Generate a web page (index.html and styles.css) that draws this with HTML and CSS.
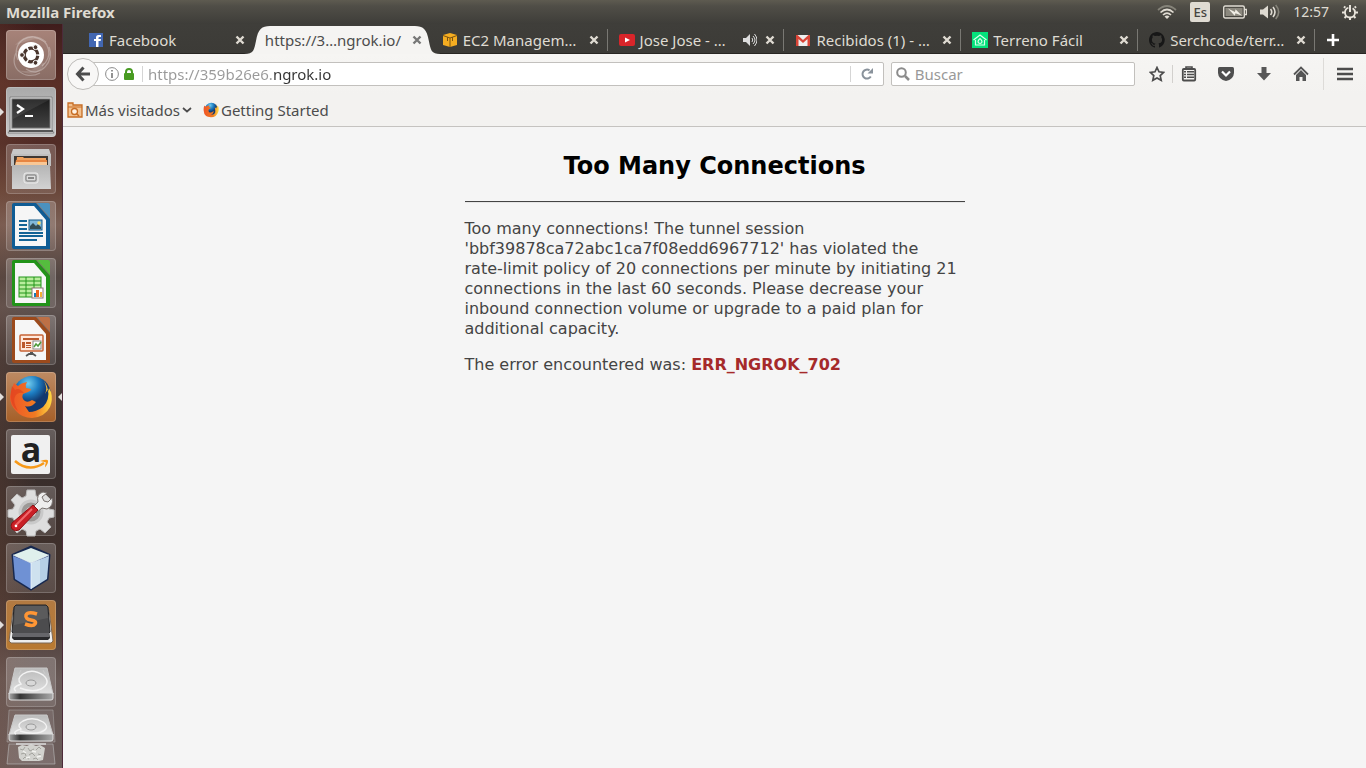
FILE: index.html
```html
<!DOCTYPE html>
<html lang="es">
<head>
<meta charset="utf-8">
<title>Too Many Connections</title>
<link rel="stylesheet" href="styles.css">
</head>
<body>
<header class="panel">
  <span class="panel-title">Mozilla Firefox</span>
  <div class="indicators">
    <button aria-label="Red"><svg width="20" height="16" viewBox="0 0 20 16" fill="none" stroke-width="1.7"><path d="M1 6Q10-2 19 6" stroke="#858379"/><path d="M3.500 8.500Q10 2.500 16.500 8.500M6 11Q10 7 14 11" stroke="#dfdbd2"/><path d="M7.500 12.500L10 15l2.500-2.500Q10 10.500 7.500 12.500z" fill="#dfdbd2" stroke="none"/></svg></button>
    <button class="keyboard">Es</button>
    <button aria-label="Batería"><svg width="24" height="14" viewBox="0 0 24 14"><rect x=".7" y="1" width="20.600" height="12" rx="1.500" fill="none" stroke="#dfdbd2" stroke-width="1.400"/><rect x="2.500" y="3" width="17" height="8" fill="#8b887e"/><path d="M22 4.500h1.500v5H22" fill="none" stroke="#dfdbd2" stroke-width="1.400"/><path d="M5 3.500l7 3.500.5-2.800 6.500 6.600-6.500-2.600-.8 2.600z" fill="#efece4"/></svg></button>
    <button aria-label="Volumen"><svg width="20" height="16" viewBox="0 0 20 16" fill="none" stroke="#dfdbd2" stroke-width="1.600"><path d="M0 5.500h3L8 1.500v13L3 10.500H0z" fill="#dfdbd2" stroke="none"/><path d="M10.500 5q2.500 3 0 6M13 3q4 5 0 10"/><path d="M15.700 1q6 7 0 14" stroke="#858379"/></svg></button>
    <button class="clock">12:57</button>
    <button aria-label="Sistema"><svg width="16" height="16" viewBox="0 0 16 16" fill="none" stroke="#e8e4db"><circle cx="8" cy="8.500" r="5" stroke-width="1.800" stroke-dasharray="27 4.400" stroke-dashoffset="-25.700"/><path d="M8 1v7" stroke-width="2"/><path d="M3.300 3.800L2 2.500M12.700 3.800L14 2.500M3 8.500H0M13 8.500h3M4.500 12L2.500 14M11.500 12l2 2M8 13v3" stroke-width="2"/></svg></button>
  </div>
</header>

<div class="desktop">
<nav class="launcher" aria-label="Lanzador">
  <button class="tile dash" aria-label="Buscar en el equipo"><svg viewBox="0 0 50 50"><g fill="none" stroke="#fff" stroke-opacity=".28" stroke-width="1.300"><path d="M12 30C4 12 25-1 40 12M36 36c11-9 9-26-8-29M20 39C35 49 49 30 43 17M11 21C1 38 19 51 34 43"/></g><path d="M9 15Q25-3 42 15 33 7 25 10zM39 33Q33 50 11 40q18 4 21-8z" fill="#fff" opacity=".14"/><circle cx="25" cy="25" r="13" fill="#fff"/><circle cx="25" cy="25" r="6.800" fill="none" stroke="#49352d" stroke-width="3.200" stroke-dasharray="12.600 1.640" stroke-dashoffset="-.8"/><g fill="#49352d" stroke="#fff" stroke-width="1"><circle cx="16" cy="25" r="2.400"/><circle cx="29.500" cy="17.200" r="2.400"/><circle cx="29.500" cy="32.800" r="2.400"/></g></svg></button>
  <button class="tile terminal running" aria-label="Terminal"><svg viewBox="0 0 50 50"><defs><linearGradient id="scr" y2="1" x2="0"><stop stop-color="#1d1d1d"/><stop offset="1" stop-color="#444"/></linearGradient></defs><path d="M4 10h42v33l2 3H2l2-3z" fill="#ddd" stroke="#777" stroke-width=".8"/><path d="M3 43h44v2H3z" fill="#555"/><rect x="6" y="12" width="38" height="29" fill="url(#scr)" stroke="#777"/><path d="M7 13h36L7 32z" fill="#fff" opacity=".08"/><path d="M11 18l6 4-6 4M19 29h8" fill="none" stroke="#fff" stroke-width="2.200"/></svg></button>
  <button class="tile" aria-label="Archivos"><svg viewBox="0 0 50 50"><defs><linearGradient id="cab" y2="1" x2="0"><stop stop-color="#b5b5b5"/><stop offset="1" stop-color="#d2d2d2"/></linearGradient></defs><path d="M7 5h36l2 6v10H5V11z" fill="#c8c8c8"/><path d="M5 10h40v12H5z" fill="#bfbfbf"/><path d="M8 12h34v10H8z" fill="#3f3833"/><path d="M11 13h6l1 1h22v8H10z" fill="#f0a15d"/><path d="M10 16h31v6H9z" fill="#e78542"/><path d="M10 18h31v4H9z" fill="#f8c796"/><path d="M6 21h38l1 24H6z" fill="url(#cab)"/><rect x="18" y="29" width="14" height="10" rx="2" fill="#c8c8c8" stroke="#eee"/><rect x="20" y="31" width="10" height="6" rx="1" fill="#ddd" stroke="#777"/><path d="M22 34h6" stroke="#888" stroke-width="2"/></svg></button>
  <button class="tile" aria-label="LibreOffice Writer"><svg viewBox="0 0 50 50"><path d="M8 2h22l14 16v30H8q-2 0-2-2V4q0-2 2-2z" fill="#0f5c94"/><path d="M9 5h19l12 14v26H9z" fill="#f6f6f6"/><path d="M31 2h11q2 0 2 2v13z" fill="#4b91be"/><g stroke="#146496" stroke-width="2"><path d="M13 20h8M13 24h8M13 28h8M13 32h24M13 35h24M13 39h18"/></g><rect x="23" y="19" width="13" height="10" fill="#81b8d9" stroke="#155b87"/><path d="M24 28v-3l3-3 3 3 2-2 3 3v2z" fill="#334d55"/><circle cx="33" cy="22" r="1.700" fill="#ffdd5e"/></svg></button>
  <button class="tile" aria-label="LibreOffice Calc"><svg viewBox="0 0 50 50"><path d="M8 2h22l14 16v30H8q-2 0-2-2V4q0-2 2-2z" fill="#229319"/><path d="M9 5h19l12 14v26H9z" fill="#f6f6f6"/><path d="M31 2h11q2 0 2 2v13z" fill="#55bd3e"/><rect x="13" y="19" width="22" height="20" fill="#b9ed9d" stroke="#23951b"/><path d="M13 23h22M13 27h22M13 31h22M13 35h22M20 19v20M28 19v20" stroke="#23951b"/><rect x="26" y="30" width="11" height="10" fill="#fff" stroke="#8c7777"/><path d="M28 35h2v4h-2z" fill="#187cb8"/><path d="M30 32h3v7h-3z" fill="#ed641f"/><path d="M34 34h2v5h-2z" fill="#f5af35"/></svg></button>
  <button class="tile" aria-label="LibreOffice Impress"><svg viewBox="0 0 50 50"><path d="M8 2h22l14 16v30H8q-2 0-2-2V4q0-2 2-2z" fill="#9c4a1c"/><path d="M9 5h19l12 14v26H9z" fill="#f6f6f6"/><path d="M31 2h11q2 0 2 2v13z" fill="#bd7046"/><rect x="14" y="20" width="23" height="16" rx="1" fill="#ffe9dc" stroke="#c76334" stroke-width="1.500"/><path d="M17 23h16v2H17zM16 27h3v6h-3zM20 27h5v2h-5zM20 30h5v1h-5zM20 32h5v1h-5z" fill="#bc592c"/><rect x="27" y="26" width="8" height="8" fill="#fff" stroke="#888"/><path d="M28 32l2-3 2 2 3-4" fill="none" stroke="#4c9a39" stroke-width="1.500"/><path d="M25 37v2M20 41l3-2h4l3 2M24 38h3" fill="none" stroke="#555" stroke-width="1.800"/></svg></button>
  <button class="tile firefox running focused" aria-label="Firefox"><svg viewBox="0 0 50 50"><defs><radialGradient id="globe" cx=".4" cy=".2"><stop stop-color="#72cdef"/><stop offset=".55" stop-color="#1c7bc0"/><stop offset="1" stop-color="#12386e"/></radialGradient><linearGradient id="fox" x1="0" x2="1"><stop stop-color="#ef5527"/><stop offset=".6" stop-color="#f07a22"/><stop offset="1" stop-color="#ffda42"/></linearGradient></defs><circle cx="26" cy="23" r="19" fill="url(#globe)"/><path d="M38 9q4 7 1 13l3-5q2 11-5 18-7 5-14 5l-4-6q6 2 11-4l-4-2q-4 3-7 1-4-3-2-7l5-2q3-1 3-3l-5-1q-1-3 1-6-6 1-9 4l-4-3q-3 6-4 14Q4 33 10 39q6 7 16 7 13-1 18-11 3-7 1-15l-2-4-1 5q0-7-4-12z" fill="url(#fox)"/><path d="M6 14q-4 18 6 25-7-12-1-17 3-2 7-1-5-6-9-3z" fill="#dd3d1c" opacity=".6"/></svg></button>
  <button class="tile" aria-label="Amazon"><svg viewBox="0 0 50 50"><rect x="5" y="6" width="39" height="39" rx="2" fill="#f0f0f0"/><text x="25" y="33" class="amazon-a" text-anchor="middle">a</text><path d="M9 32q14 12 29 2" fill="none" stroke="#f79919" stroke-width="2.500"/><path d="M34 32q7-2 8-.5.5 3-3 7 0-3 1-5-2-1-6-1.500z" fill="#f79919"/></svg></button>
  <button class="tile" aria-label="Configuración del sistema"><svg viewBox="0 0 50 50"><path d="M21 4h8l1 6 4 2 5-4 6 6-4 5 2 4 5 1v7l-5 1-2 4 4 5-6 6-5-4-4 2-1 5h-8l-1-5-4-2-5 4-6-6 4-5-2-4-5-1v-7l5-1 2-4-4-5 6-6 5 4 4-2z" fill="#dedede" stroke="#bbb"/><circle cx="25" cy="26" r="11" fill="#9c9997" stroke="#c9c9c9" stroke-width="3"/><circle cx="25" cy="26" r="5" fill="#eee"/><path d="M27 21l5-5q-2-8 5-10l4 1-5 4 2 4 4 1 4-4q2 8-5 11l-5-1-6 5z" fill="#eee" stroke="#77716e"/><path d="M27 19l5 5-19 20q-4 2-7-1-2-3 0-6z" fill="#c91f25" stroke="#8e0e12"/><path d="M26 23L9 40" stroke="#f0696c" stroke-width="2"/><circle cx="10" cy="40" r="1.300" fill="#fff"/></svg></button>
  <button class="tile" aria-label="NetBeans"><svg viewBox="0 0 50 50"><path d="M25 4l18 8-2 24-16 10L9 36 7 12z" fill="#1c2f65" stroke="#17284f" stroke-width="3" stroke-linejoin="round"/><path d="M25 5l18 7-18 8L7 12z" fill="#dff0ec"/><path d="M7 13l18 7v26L9 36z" fill="#6f91d4"/><path d="M43 13l-18 7v26l16-10z" fill="#b5cfe6"/><path d="M25 20v26l9-6V17z" fill="#dcebf4" opacity=".65"/><path d="M7 12l18 8 18-8M25 20v26" fill="none" stroke="#f1faff" stroke-opacity=".7"/></svg></button>
  <button class="tile sublime running" aria-label="Sublime Text"><svg viewBox="0 0 50 50"><path d="M7 10h36l4 31-2 2H5l-2-2z" fill="#eee" stroke="#7c6856"/><path d="M7 31h36l1 7-2 2H8l-2-2z" fill="#29292b"/><path d="M10 5h30l2 2 2 25-2 2H8l-2-2L8 7z" fill="#4c4c4e" stroke="#242426"/><path d="M9 6h32l1 12-34 7z" fill="#777" opacity=".35"/><path d="M7 33h36v4H7z" fill="#66666a"/><path d="M31 14q-9-3-11 1-1 4 5 5 6 1 4 4-2 3-10 0" fill="none" stroke="#ff9635" stroke-width="3.500"/></svg></button>
  <button class="tile" aria-label="Disco"><svg viewBox="0 0 50 50"><defs><linearGradient id="metal" y2="1" x2="0"><stop stop-color="#bbb"/><stop offset="1" stop-color="#e2e2e2"/></linearGradient><linearGradient id="edge"><stop stop-color="#aaa"/><stop offset=".25" stop-color="#333"/><stop offset="1" stop-color="#aaa"/></linearGradient></defs><path d="M9 11h32l6 26H3z" fill="url(#metal)" stroke="#c9c9c9"/><path d="M3 36h44v5q0 2-2 2H5q-2 0-2-2z" fill="url(#edge)" stroke="#ddd"/><path d="M10 34Q5 31 15 27q-5-5 2-10 9-6 20 1 9 8-2 14-9 4-21-1" fill="none" stroke="#f3f3f3" stroke-width="1.500"/><ellipse cx="25" cy="26" rx="5" ry="3" fill="#d8d8d8" stroke="#999"/><path d="M15 13l-2 4M37 13l2 4" stroke="#ccc"/></svg></button>
  <button class="tile folded" aria-label="Papelera y disco"><svg viewBox="0 0 50 58"><path d="M3 2h44l2 32H1z" fill="#fff" fill-opacity=".1" stroke="#bbb" stroke-opacity=".4"/><path d="M3 36h44l2 20H1z" fill="#fff" fill-opacity=".12" stroke="#bbb" stroke-opacity=".6"/><path d="M9 7h32l6 20H3z" fill="url(#metal)" stroke="#c9c9c9"/><path d="M3 26h44v5q0 2-2 2H5q-2 0-2-2z" fill="url(#edge)" stroke="#ddd"/><path d="M10 26q-4-2 5-5-5-4 2-8 10-5 20 1 8 6-2 10-9 3-21-1" fill="none" stroke="#f3f3f3" stroke-width="1.400"/><ellipse cx="25" cy="19" rx="5" ry="3" fill="#d8d8d8" stroke="#999"/><path d="M12 39l4-2 5 1 4-2 5 2 4-1 5 3-2 12-4 1H16l-3-3z" fill="#d2d2ce"/><path d="M14 41l3 1 2-3M22 40l2 3 4-2M30 42l3-3 2 2M15 46l4-1 1 3M23 47l3-2 3 3M32 46l3 1M17 51l2-2 4 2M27 51l3-1 2 2" fill="none" stroke="#a3a39d"/><path d="M17 43l3 2M26 43l4 1M20 50l4-1M31 49l4-1" stroke="#f2f2ef" stroke-width="1.500"/><path d="M10 36h30" stroke="#ddd" stroke-width="1.500"/></svg></button>
</nav>

<div class="browser">
  <div class="tabs">
    <div class="tab"><svg class="favicon" viewBox="0 0 16 16"><path d="M1 1h14v14H1z" fill="#4267b2"/><path d="M8 15V9H6V7h2V5.500Q8 3 10.500 3H13v2h-1.500Q10.500 5 10.500 6v1H13l-.4 2h-2.100v6z" fill="#fff"/></svg><button class="tab-label">Facebook</button><button class="close" aria-label="Cerrar"><svg viewBox="0 0 10 10"><path d="M1.500 1.500l7 7M8.500 1.500l-7 7"/></svg></button></div>
    <div class="tab active"><svg class="tab-shape" viewBox="0 0 197 28" preserveAspectRatio="none"><path d="M0 28C10 28 10 24 12 15 14 3 18 0 26 0h145c8 0 12 3 14 15 2 9 2 13 12 13z" fill="#f5f4f2"/></svg><button class="tab-label">https://3…ngrok.io/</button><button class="close" aria-label="Cerrar"><svg viewBox="0 0 10 10"><path d="M1.500 1.500l7 7M8.500 1.500l-7 7"/></svg></button></div>
    <div class="tab ruled"><svg class="favicon" viewBox="0 0 16 16"><path d="M1 3l7-2 7 2v10l-7 2-7-2z" fill="#f5ad21"/><path d="M1 3.500L8 6l7-2.500M8 6v9M5.500 5v4M10.500 5v4" fill="none" stroke="#7b5412"/></svg><button class="tab-label">EC2 Managem…</button><button class="close" aria-label="Cerrar"><svg viewBox="0 0 10 10"><path d="M1.500 1.500l7 7M8.500 1.500l-7 7"/></svg></button></div>
    <div class="tab ruled"><svg class="favicon" viewBox="0 0 16 16"><rect y="2" width="16" height="12" rx="2" fill="#d9252a"/><path d="M6 5.500v5L11 8z" fill="#fff"/></svg><button class="tab-label">Jose Jose - …</button><button class="sound" aria-label="Silenciar"><svg viewBox="0 0 14 14"><path d="M0 5h3l4-4v12L3 9H0z" fill="#ddd"/><path d="M9 5q1.500 2 0 4M10 3q4 4 0 8M11.500 1q5 6 0 12" fill="none" stroke="#ddd"/></svg></button><button class="close" aria-label="Cerrar"><svg viewBox="0 0 10 10"><path d="M1.500 1.500l7 7M8.500 1.500l-7 7"/></svg></button></div>
    <div class="tab ruled"><svg class="favicon" viewBox="0 0 16 16"><path d="M1 3h14v11H1z" fill="#eee"/><path d="M1 14V3h1.500L8 8l5.500-5H15v11h-2.500V7L8 11 3.500 7v7z" fill="#d94436"/></svg><button class="tab-label">Recibidos (1) - …</button><button class="close" aria-label="Cerrar"><svg viewBox="0 0 10 10"><path d="M1.500 1.500l7 7M8.500 1.500l-7 7"/></svg></button></div>
    <div class="tab ruled"><svg class="favicon" viewBox="0 0 16 16"><path d="M0 0h16v16H0z" fill="#04e27c"/><path d="M1.500 8L8 3l6.500 5M3.500 8v5h9V8M8 6.500q-4 4 0 5 4-1 0-5" fill="none" stroke="#d8ffeb" stroke-width="1.200"/></svg><button class="tab-label">Terreno Fácil</button><button class="close" aria-label="Cerrar"><svg viewBox="0 0 10 10"><path d="M1.500 1.500l7 7M8.500 1.500l-7 7"/></svg></button></div>
    <div class="tab ruled"><svg class="favicon" viewBox="0 0 16 16"><path d="M8 0C3.600 0 0 3.600 0 8c0 3.500 2.300 6.500 5.500 7.600.4.100.5-.2.500-.4v-1.400c-2.200.5-2.700-1-2.700-1-.4-.9-.9-1.200-.9-1.200-.7-.5.100-.5.100-.5.800.1 1.200.8 1.200.8.700 1.300 1.900.9 2.300.7.100-.5.300-.9.500-1.100-1.800-.2-3.600-.9-3.600-4 0-.9.300-1.600.8-2.100-.1-.2-.4-1 .1-2.100 0 0 .7-.2 2.200.8a7.600 7.600 0 0 1 4 0c1.500-1 2.200-.8 2.200-.8.400 1.100.2 1.900.1 2.100.5.600.8 1.300.8 2.100 0 3.100-1.900 3.700-3.700 3.900.3.300.6.800.6 1.500v2.200c0 .2.100.5.500.4A8 8 0 0 0 8 0z" fill="#171717"/></svg><button class="tab-label">Serchcode/terr…</button><button class="close" aria-label="Cerrar"><svg viewBox="0 0 10 10"><path d="M1.500 1.500l7 7M8.500 1.500l-7 7"/></svg></button></div>
    <button class="new-tab" aria-label="Pestaña nueva"><svg width="14" height="14" viewBox="0 0 14 14"><path d="M7 1v12M1 7h12" stroke="#fff" stroke-width="2.600"/></svg></button>
  </div>

  <div class="toolbar">
    <button class="back" aria-label="Atrás"><svg width="16" height="16" viewBox="0 0 16 16" fill="none" stroke="#4c4c4c" stroke-width="3"><path d="M8.500 1.500L2.500 8l6 6.500M3 8h12"/></svg></button>
    <div class="urlbar">
      <svg width="14" height="14" viewBox="0 0 14 14"><circle cx="7" cy="7" r="6.400" fill="none" stroke="#8b8b8b"/><path d="M6.200 3h1.600v1.600H6.200zM6.200 6h1.600v5H6.200z" fill="#777"/></svg>
      <svg width="10" height="12" viewBox="0 0 10 12"><path d="M2 6V4a3 3 0 0 1 6 0v2" fill="none" stroke="#489b22" stroke-width="2"/><rect y="5" width="10" height="7" rx="1" fill="#489b22"/></svg>
      <label class="divider" for="url" aria-label="Dirección"></label>
      <input id="url" class="url" type="text" value="https://359b26e6.ngrok.io">
      <button class="reload" aria-label="Recargar"><svg width="12" height="12" viewBox="0 0 12 12"><path d="M9.800 8.500A4.500 4.500 0 1 1 8.500 2.300" fill="none" stroke="#89929b" stroke-width="2"/><path d="M6.500 5.500H12V0z" fill="#89929b"/></svg></button>
    </div>
    <div class="search">
      <svg width="14" height="14" viewBox="0 0 14 14" fill="none" stroke="#8b8b8b"><circle cx="5.500" cy="5.500" r="4.300" stroke-width="2"/><path d="M9 9l4 4" stroke-width="2.500"/></svg>
      <input type="search" aria-label="Buscar" placeholder="Buscar">
    </div>
    <div class="tools">
      <button class="star" aria-label="Marcar"><svg viewBox="0 0 16 16"><path d="M8 1.500l2 4.300 4.700.6-3.500 3.200 1 4.700L8 12l-4.200 2.300 1-4.700L1.300 6.400 6 5.800z" fill="none" stroke="#4c4c4c" stroke-width="1.700"/></svg></button>
      <button class="narrow" aria-label="Marcadores"><svg viewBox="0 0 16 16"><path d="M5 3V1h6v2" fill="none" stroke="#4c4c4c" stroke-width="1.600"/><rect x="1.800" y="3" width="12.400" height="11.500" rx="1" fill="none" stroke="#4c4c4c" stroke-width="1.800"/><path d="M3 5.800h2M6 5.800h7M3 8.500h2M6 8.500h7M3 11.300h2M6 11.300h7" stroke="#4c4c4c" stroke-width="1.500"/></svg></button>
      <button aria-label="Pocket"><svg viewBox="0 0 16 16"><path d="M1.500 1h13q1.500 0 1.500 1.500V7q-.5 6.500-8 8Q.5 13.500 0 7V2.500Q0 1 1.500 1z" fill="#4f4f4f"/><path d="M4 5.500l4 4 4-4" fill="none" stroke="#fff" stroke-width="2.200"/></svg></button>
      <button class="narrow" aria-label="Descargas"><svg viewBox="0 0 16 16"><path d="M5.500 1h5v6H15l-7 7.500L1 7h4.500z" fill="#575757"/></svg></button>
      <button aria-label="Inicio"><svg viewBox="0 0 16 16"><path d="M1 8.500l7-7 7 7" fill="none" stroke="#555" stroke-width="1.800"/><path d="M3 9l5-5 5 5v6H9.500v-4h-3v4H3z" fill="#555"/></svg></button>
      <button class="menu" aria-label="Menú"><svg viewBox="0 0 16 16"><path d="M0 3h16M0 8h16M0 13h16" stroke="#4c4c4c" stroke-width="2.400"/></svg></button>
    </div>
  </div>

  <div class="bookmarks">
    <button><svg width="16" height="16" viewBox="0 0 16 16"><path d="M1 15V1h5v2h9v12z" fill="#f3c290" stroke="#c76d24" stroke-width="1.300"/><path d="M1 5h14" stroke="#c76d24"/><circle cx="7.500" cy="9.500" r="3" fill="#fff3e5" stroke="#c76d24" stroke-width="1.300"/><path d="M9.500 11.500l2.500 2.500" stroke="#c76d24" stroke-width="1.500"/></svg>Más visitados<svg width="10" height="6" viewBox="0 0 10 6"><path d="M1 1l4 3.500L9 1" fill="none" stroke="#4c4c4c" stroke-width="1.700"/></svg></button>
    <a href="#"><svg width="16" height="16" viewBox="2 2 46 46"><circle cx="26" cy="23" r="19" fill="url(#globe)"/><path d="M38 6q5 6 2 13l5-6q4 9 1 17-5 16-21 16Q5 45 4 27q-1-8 2-15l3 4q5-4 13-4-3 2-2 5l5 2-6 4q-3 6 2 9 5 2 11-4 2 7-7 10 14 1 12-13l-1-8 4 4q2-6-2-15z" fill="url(#fox)"/></svg>Getting Started</a>
  </div>

  <main class="page">
    <article class="message">
      <h1>Too Many Connections</h1>
      <hr>
      <p>Too many connections! The tunnel session 'bbf39878ca72abc1ca7f08edd6967712' has violated the <span class="term">rate-limit</span> policy of 20 connections per minute by initiating 21 connections in the last 60 seconds. Please decrease your inbound connection volume or upgrade to a paid plan for additional capacity.</p>
      <p>The error encountered was: <strong>ERR_NGROK_702</strong></p>
    </article>
  </main>
</div>
</div>
</body>
</html>
```
FILE: styles.css
```css
* { box-sizing: border-box; }
body {
  margin: 0;
  min-height: 100vh;
  display: flex;
  flex-direction: column;
  font: 15px/20px "Noto Sans", "Open Sans", sans-serif;
  color: #4c4c4c;
  background: #f5f5f5;
}
button, input {
  font: inherit;
  color: inherit;
  border: 0;
  padding: 0;
  margin: 0;
  background: none;
}
svg { display: block; flex: none; }

.panel {
  height: 24px;
  padding: 0 8px 0 6px;
  display: flex;
  align-items: center;
  justify-content: space-between;
  background: linear-gradient(#5e5b50, #504e47 25%, #3e3d39);
  color: #dfdbd2;
}
.panel-title { font-weight: bold; }
.indicators { display: flex; align-items: center; gap: 13px; }
.clock { font-size: 14px; }
.keyboard {
  width: 20px;
  height: 20px;
  border-radius: 2px;
  background: #dfdbd2;
  color: #45443f;
  font-size: 13px;
  font-weight: 500;
}

.desktop { flex: 1; display: flex; }

.launcher {
  width: 63px;
  flex: none;
  padding: 6px 0 0 6px;
  display: flex;
  flex-direction: column;
  gap: 7px;
  background:
    linear-gradient(to right, #80503c30, transparent 60%),
    linear-gradient(#3f1d1c, #5a2f27 8%, #512c26 16%, #684538 22%, #7b6056 27%, #514541 34%, #5f5350 38%, #423836 45%, #382d2b 60%, #40312c 72%, #4a3a36 80%, #675855 88%, #6b5c5a);
  border-right: 1px solid #4d2b3a;
}
.tile {
  position: relative;
  width: 50px;
  height: 50px;
  flex: none;
  border-radius: 4px;
  background: linear-gradient(#ffffff38, #ffffff1c);
  box-shadow: inset 0 0 0 1px #ffffff30;
}
.tile svg { width: 50px; height: 50px; overflow: visible; }
.dash { background: linear-gradient(#a78379, #896d65); }
.terminal { background: linear-gradient(#aaa, #c6c6c6); }
.firefox { background: linear-gradient(#bd8a63, #a55f28); }
.sublime { background: linear-gradient(#b27a42, #b87931); }
.folded { height: 58px; margin-top: -6px; background: none; box-shadow: none; }
.tile.folded svg { height: 58px; }
.running::before, .focused::after {
  content: "";
  position: absolute;
  top: 21px;
  border: 4px solid transparent;
}
.running::before { left: -6px; border-left-color: #e2dedb; border-right-width: 0; }
.focused::after { right: -6px; border-right-color: #e2dedb; border-left-width: 0; }
.amazon-a { font: bold 34px "Open Sans", sans-serif; fill: #222; }

.browser { flex: 1; min-width: 0; display: flex; flex-direction: column; }
.tabs {
  height: 30px;
  display: flex;
  padding: 2px 0 0 14px;
  background: linear-gradient(#3f3e3a, #3c3b37);
  border-bottom: 1px solid #282623;
  color: #dfdbd2;
}
.tab {
  position: relative;
  flex: 1;
  min-width: 0;
  display: flex;
  align-items: center;
  gap: 5px;
  padding: 0 6px 0 11px;
}
.tab.ruled::after {
  content: "";
  position: absolute;
  right: 0;
  top: 3px;
  height: 22px;
  border-right: 1px solid #797873;
}
.favicon { width: 16px; height: 16px; }
.tab-label {
  flex: 1;
  min-width: 0;
  text-align: left;
  white-space: nowrap;
}
.close { width: 16px; display: flex; justify-content: center; }
.close svg { width: 10px; height: 10px; stroke: #dfdbd2; stroke-width: 2.400; }
.sound svg { width: 14px; height: 14px; }
.active { color: #4c4c4c; z-index: 1; }
.active .close svg { stroke: #777; }
.active > button { position: relative; }
.tab-shape { position: absolute; left: -10px; top: 0; width: calc(100% + 20px); height: 28px; }
.new-tab { width: 51px; display: flex; align-items: center; padding-left: 11px; }

.toolbar {
  height: 40px;
  display: flex;
  align-items: center;
  padding-left: 4px;
  background: linear-gradient(#f6f5f3, #f3f2f0);
}
.back {
  position: relative;
  z-index: 1;
  width: 32px;
  height: 32px;
  flex: none;
  display: grid;
  place-items: center;
  border: 1px solid #bdbbb8;
  border-radius: 50%;
  background: #f8f7f6;
}
.urlbar, .search {
  height: 24px;
  display: flex;
  align-items: center;
  border: 1px solid #c2c0bd;
  border-radius: 2px;
  background: #fff;
}
.urlbar { flex: 800; min-width: 0; margin-left: -16px; padding-left: 21px; gap: 5px; }
.divider { height: 16px; margin-left: 3px; border-left: 1px solid #d5d5d5; }
.url {
  flex: 1;
  min-width: 0;
  height: 22px;
  background: linear-gradient(to right, #999 125px, #333 125px);
  background-clip: text;
  -webkit-text-fill-color: transparent;
}
.reload {
  width: 33px;
  height: 16px;
  display: grid;
  place-items: center;
  border-left: 1px solid #d5d5d5;
}
.search { flex: 245; min-width: 0; margin-left: 7px; padding-left: 4px; gap: 5px; }
.search input { flex: 1; min-width: 0; outline: 0; }
.search input::placeholder { color: #999; opacity: 1; }
.tools { display: flex; align-items: center; margin-left: 14px; }
.tools button { width: 44px; height: 18px; display: grid; place-items: center; }
.tools svg { width: 16px; height: 16px; }
.tools .star { width: 24px; justify-content: start; border-right: 1px solid #d2d0cd; }
.tools .narrow { width: 31px; }
.tools .menu { width: 43px; height: 32px; border-left: 1px solid #dddbd8; }

.bookmarks {
  height: 33px;
  display: flex;
  align-items: center;
  gap: 11px;
  padding-left: 4px;
  background: #f3f2f0;
  border-bottom: 1px solid #c5c3c0;
}
.bookmarks button, .bookmarks a {
  display: flex;
  align-items: center;
  gap: 2px;
  color: inherit;
  text-decoration: none;
}

.page { flex: 1; padding: 25px 16px; font: 16px/20px "DejaVu Sans", sans-serif; }
.message { max-width: 500px; margin: 0 auto; color: #444; }
.message h1 {
  margin: 0 0 21px;
  font-size: 24px;
  line-height: 28px;
  text-align: center;
  color: #000;
}
.message hr {
  margin: 0;
  border: solid #444;
  border-width: 1px 0;
  border-bottom-color: #e6e6e6;
}
.message p { margin: 16px 0 0; }
.term { white-space: nowrap; }
.message strong { color: #a52a2a; }
```
